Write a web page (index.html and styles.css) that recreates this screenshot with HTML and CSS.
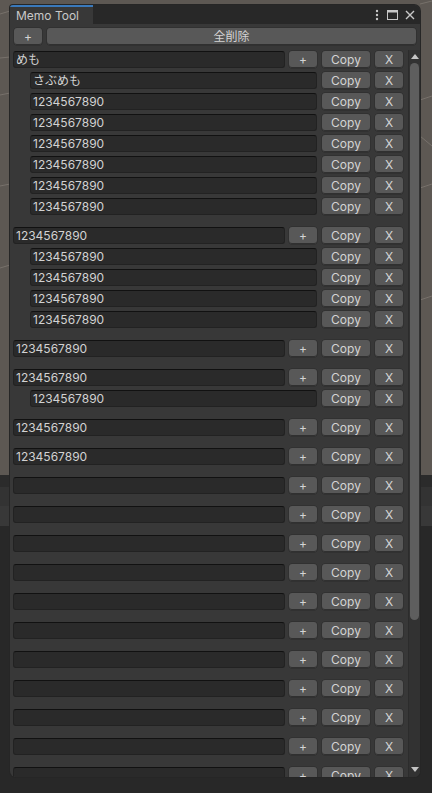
FILE: index.html
```html
<!DOCTYPE html>
<html lang="ja">
<head>
<meta charset="utf-8">
<title>Memo Tool</title>
<link rel="stylesheet" href="styles.css">
</head>
<body>
<svg class="scene" width="432" height="793" viewBox="0 0 432 793">
  <g stroke="#77716b" stroke-width="1" fill="none">
    <path d="M0 14 L10 11"/>
    <path d="M0 58 L10 57"/>
    <path d="M0 95 L10 93"/>
    <path d="M0 186 L10 184"/>
    <path d="M0 268 L10 265"/>
    <path d="M420 4 L432 1"/>
    <path d="M420 100 L432 96"/>
    <path d="M420 136 L432 146"/>
    <path d="M420 188 L432 184"/>
    <path d="M420 300 L432 296"/>
  </g>
</svg>
<div class="window">
  <div class="titlebar">
    <div class="tab">Memo Tool</div>
    <div class="title-fill">
      <svg class="ico" width="6" height="12" viewBox="0 0 6 12"><circle cx="3" cy="2" r="1.2" fill="#c8c8c8"/><circle cx="3" cy="6" r="1.2" fill="#c8c8c8"/><circle cx="3" cy="10" r="1.2" fill="#c8c8c8"/></svg>
      <svg class="ico" width="11" height="10" viewBox="0 0 11 10"><rect x="0.5" y="0.5" width="10" height="9" fill="none" stroke="#c8c8c8" stroke-width="1"/><rect x="0.5" y="0.5" width="10" height="2" fill="#c8c8c8"/></svg>
      <svg class="ico" width="10" height="10" viewBox="0 0 10 10"><path d="M1 1 L9 9 M9 1 L1 9" stroke="#c8c8c8" stroke-width="1.4"/></svg>
    </div>
  </div>
  <div class="toolbar">
    <button class="btn btn-add-top">+</button>
    <button class="btn btn-clear">全削除</button>
  </div>
  <div class="content">
    <div class="list">
      <div class="group">
        <div class="row main"><div class="field">めも</div><button class="btn plus">+</button><button class="btn copy">Copy</button><button class="btn del">X</button></div>
        <div class="row sub"><div class="field">さぶめも</div><button class="btn copy">Copy</button><button class="btn del">X</button></div>
        <div class="row sub"><div class="field">1234567890</div><button class="btn copy">Copy</button><button class="btn del">X</button></div>
        <div class="row sub"><div class="field">1234567890</div><button class="btn copy">Copy</button><button class="btn del">X</button></div>
        <div class="row sub"><div class="field">1234567890</div><button class="btn copy">Copy</button><button class="btn del">X</button></div>
        <div class="row sub"><div class="field">1234567890</div><button class="btn copy">Copy</button><button class="btn del">X</button></div>
        <div class="row sub"><div class="field">1234567890</div><button class="btn copy">Copy</button><button class="btn del">X</button></div>
        <div class="row sub"><div class="field">1234567890</div><button class="btn copy">Copy</button><button class="btn del">X</button></div>
      </div>
      <div class="group">
        <div class="row main"><div class="field">1234567890</div><button class="btn plus">+</button><button class="btn copy">Copy</button><button class="btn del">X</button></div>
        <div class="row sub"><div class="field">1234567890</div><button class="btn copy">Copy</button><button class="btn del">X</button></div>
        <div class="row sub"><div class="field">1234567890</div><button class="btn copy">Copy</button><button class="btn del">X</button></div>
        <div class="row sub"><div class="field">1234567890</div><button class="btn copy">Copy</button><button class="btn del">X</button></div>
        <div class="row sub"><div class="field">1234567890</div><button class="btn copy">Copy</button><button class="btn del">X</button></div>
      </div>
      <div class="group">
        <div class="row main"><div class="field">1234567890</div><button class="btn plus">+</button><button class="btn copy">Copy</button><button class="btn del">X</button></div>
      </div>
      <div class="group">
        <div class="row main"><div class="field">1234567890</div><button class="btn plus">+</button><button class="btn copy">Copy</button><button class="btn del">X</button></div>
        <div class="row sub"><div class="field">1234567890</div><button class="btn copy">Copy</button><button class="btn del">X</button></div>
      </div>
      <div class="group">
        <div class="row main"><div class="field">1234567890</div><button class="btn plus">+</button><button class="btn copy">Copy</button><button class="btn del">X</button></div>
      </div>
      <div class="group">
        <div class="row main"><div class="field">1234567890</div><button class="btn plus">+</button><button class="btn copy">Copy</button><button class="btn del">X</button></div>
      </div>
      <div class="group"><div class="row main"><div class="field"></div><button class="btn plus">+</button><button class="btn copy">Copy</button><button class="btn del">X</button></div></div>
      <div class="group"><div class="row main"><div class="field"></div><button class="btn plus">+</button><button class="btn copy">Copy</button><button class="btn del">X</button></div></div>
      <div class="group"><div class="row main"><div class="field"></div><button class="btn plus">+</button><button class="btn copy">Copy</button><button class="btn del">X</button></div></div>
      <div class="group"><div class="row main"><div class="field"></div><button class="btn plus">+</button><button class="btn copy">Copy</button><button class="btn del">X</button></div></div>
      <div class="group"><div class="row main"><div class="field"></div><button class="btn plus">+</button><button class="btn copy">Copy</button><button class="btn del">X</button></div></div>
      <div class="group"><div class="row main"><div class="field"></div><button class="btn plus">+</button><button class="btn copy">Copy</button><button class="btn del">X</button></div></div>
      <div class="group"><div class="row main"><div class="field"></div><button class="btn plus">+</button><button class="btn copy">Copy</button><button class="btn del">X</button></div></div>
      <div class="group"><div class="row main"><div class="field"></div><button class="btn plus">+</button><button class="btn copy">Copy</button><button class="btn del">X</button></div></div>
      <div class="group"><div class="row main"><div class="field"></div><button class="btn plus">+</button><button class="btn copy">Copy</button><button class="btn del">X</button></div></div>
      <div class="group"><div class="row main"><div class="field"></div><button class="btn plus">+</button><button class="btn copy">Copy</button><button class="btn del">X</button></div></div>
      <div class="group"><div class="row main"><div class="field"></div><button class="btn plus">+</button><button class="btn copy">Copy</button><button class="btn del">X</button></div></div>
    </div>
    <div class="scrollbar">
      <svg class="arrow" width="8" height="5" viewBox="0 0 8 5"><path d="M0 5 L4 0 L8 5 Z" fill="#c4c4c4"/></svg>
      <div class="track"><div class="thumb"></div></div>
      <svg class="arrow" width="8" height="5" viewBox="0 0 8 5"><path d="M0 0 L8 0 L4 5 Z" fill="#c4c4c4"/></svg>
    </div>
  </div>
</div>
</body>
</html>
```
FILE: styles.css
```css
html, body {
  margin: 0;
  padding: 0;
}
body {
  width: 432px;
  height: 793px;
  overflow: hidden;
  position: relative;
  font-family: Inter, "Noto Sans CJK JP", sans-serif;
  font-size: 12px;
  color: #d2d2d2;
  background:
    linear-gradient(to bottom,
      #5d5853 0, #5d5853 475px,
      #2b2b2b 475px, #2b2b2b 487px,
      #333333 487px, #333333 506px,
      #383838 506px, #383838 526px,
      #282828 526px, #282828 793px);
}
.scene {
  position: absolute;
  left: 0;
  top: 0;
}
.window {
  position: relative;
  margin: 5px 0 0 10px;
  width: 410px;
  height: 772px;
  background: #383838;
  border-radius: 3px 6px 6px 6px;
  display: flex;
  flex-direction: column;
  overflow: hidden;
  box-shadow: 0 0 0 1px #262626;
}
.titlebar {
  height: 19px;
  display: flex;
  flex: none;
}
.tab {
  width: 83px;
  box-sizing: border-box;
  border-top: 2px solid #3a79bb;
  background: #383838;
  padding-left: 6px;
  padding-top: 1px;
  line-height: 16px;
  color: #c8c8c8;
  font-size: 12px;
}
.title-fill {
  flex: 1;
  background: #282828;
  display: flex;
  align-items: center;
  justify-content: flex-end;
  gap: 7px;
  padding-right: 5px;
}
.ico {
  display: block;
}
.toolbar {
  display: flex;
  gap: 5px;
  padding: 4px 4px 0 4px;
  height: 17px;
  flex: none;
}
.btn {
  font-family: Inter, "Noto Sans CJK JP", sans-serif;
  font-size: 12px;
  color: #d4d4d4;
  background: #585858;
  border: 0;
  border-radius: 3px;
  box-shadow: inset 0 -1px 0 #303030, 0 0 0 0.5px #2a2a2a;
  padding: 0;
  height: 17px;
  line-height: 17px;
  margin: 0;
  flex: none;
}
.btn-add-top {
  width: 28px;
}
.btn-clear {
  flex: 1;
}
.content {
  flex: 1;
  min-height: 0;
  display: flex;
  margin-top: 5px;
}
.list {
  flex: 1;
  padding-left: 3px;
  padding-top: 1px;
  overflow: hidden;
}
.group {
  margin-bottom: 12px;
}
.row {
  display: flex;
  height: 17px;
  margin-bottom: 4px;
  margin-right: 5px;
}
.row.main .field {
  margin-right: 4px;
}
.row.sub {
  margin-left: 17px;
}
.row.sub .field {
  margin-right: 5px;
}
.field {
  flex: 1;
  box-sizing: border-box;
  background: #2a2a2a;
  border: 1px solid #222222;
  border-top-color: #111111;
  border-radius: 3px;
  padding-left: 2px;
  line-height: 15px;
  color: #d2d2d2;
  white-space: nowrap;
  overflow: hidden;
}
.plus {
  width: 28px;
  margin-right: 5px;
}
.copy {
  width: 48px;
  margin-right: 5px;
}
.del {
  width: 28px;
}
.scrollbar {
  width: 12px;
  flex: none;
  background: #323232;
  border-left: 1px solid #2c2c2c;
  box-sizing: border-box;
  display: flex;
  flex-direction: column;
  align-items: center;
  padding: 4px 0 5px 0;
}
.arrow {
  display: block;
  flex: none;
}
.track {
  flex: 1;
  width: 100%;
  padding: 4px 1px 0 1px;
  box-sizing: border-box;
}
.thumb {
  height: 557px;
  background: #5e5e5e;
  border-radius: 5px;
}
```
